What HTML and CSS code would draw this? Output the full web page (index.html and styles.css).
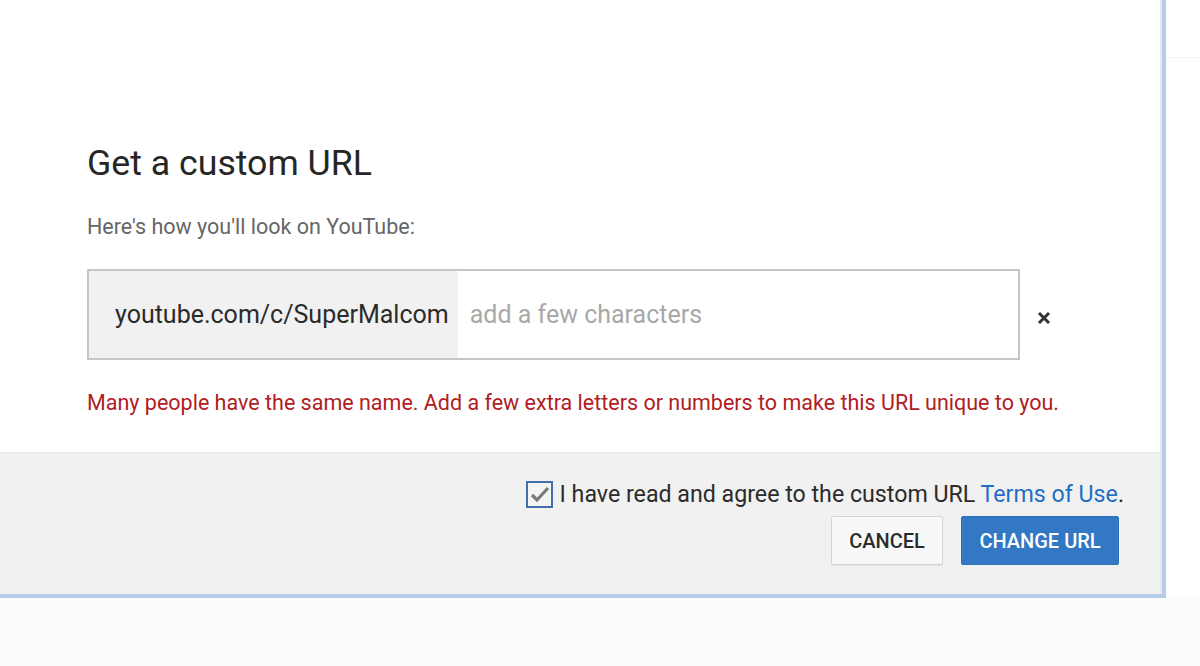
FILE: index.html
```html
<!DOCTYPE html>
<html>
<head>
<meta charset="utf-8">
<link rel="stylesheet" href="styles.css">
</head>
<body>
<div class="page">
  <div class="top">
    <div class="dialog">
      <div class="dialog-inner">
        <div class="content">
          <h1 class="title">Get a custom URL</h1>
          <p class="subtitle">Here's how you'll look on YouTube:</p>
          <div class="url-row">
            <div class="url-box">
              <span class="url-prefix">youtube.com/c/SuperMalcom</span>
              <span class="url-input">add a few characters</span>
            </div>
            <svg class="clear" viewBox="0 0 16 16" width="16" height="16"><path d="M3 3 L13 13 M13 3 L3 13" stroke="#333" stroke-width="3" stroke-linecap="butt"/></svg>
          </div>
          <p class="error">Many people have the same name. Add a few extra letters or numbers to make this URL unique to you.</p>
        </div>
        <div class="footer">
          <div class="agree">
            <span class="checkbox"><svg viewBox="0 0 27 27" width="27" height="27"><path d="M6 14 L11 19 L22 7" fill="none" stroke="#7a7a7a" stroke-width="3.2"/></svg></span>
            <span class="agree-text">I have read and agree to the custom URL <a class="link">Terms of Use</a>.</span>
          </div>
          <div class="buttons">
            <button class="btn btn-cancel">CANCEL</button>
            <button class="btn btn-primary">CHANGE URL</button>
          </div>
        </div>
      </div>
    </div>
    <div class="side"><div class="side-bar"></div></div>
  </div>
</div>
</body>
</html>
```

FILE: styles.css
```css
html, body {
  margin: 0;
  padding: 0;
}
body {
  font-family: Roboto, "Liberation Sans", Arial, sans-serif;
  background: #fcfcfc;
  width: 1200px;
  height: 666px;
  overflow: hidden;
}
.page {
  display: flex;
  flex-direction: column;
}
.top {
  display: flex;
  background: #fcfcfc;
}
.dialog {
  width: 1162px;
  border-right: 4px solid #b6cde9;
  border-bottom: 4px solid #b6cde9;
  background: #fff;
}
.dialog-inner {
  border-right: 2px solid #e9e9e9;
}
.content {
  height: 452px;
  box-sizing: border-box;
  padding: 143px 0 0 87px;
}
.title {
  margin: 0;
  font-size: 35.7px;
  line-height: 40px;
  font-weight: 400;
  color: #262626;
}
.subtitle {
  margin: 30px 0 0;
  font-size: 21.5px;
  line-height: 28px;
  color: #666;
}
.url-row {
  display: flex;
  align-items: center;
  margin-top: 28px;
}
.url-box {
  width: 933px;
  height: 91px;
  box-sizing: border-box;
  border: 2px solid #c6c6c6;
  display: flex;
  align-items: stretch;
  font-size: 25px;
}
.url-prefix {
  background: #f1f1f1;
  color: #2b2b2b;
  display: flex;
  align-items: center;
  padding: 0 9px 0 26px;
}
.url-input {
  color: #a8a8a8;
  display: flex;
  align-items: center;
  padding-left: 12px;
  background: #fff;
}
.clear {
  margin-left: 16px;
  margin-top: 6px;
}
.error {
  margin: 29px 0 0;
  font-size: 21.5px;
  line-height: 28px;
  color: #b0201f;
}
.footer {
  height: 142px;
  box-sizing: border-box;
  background: #f1f1f1;
  border-top: 1px solid #e8e8e8;
  padding-top: 27px;
  display: flex;
  flex-direction: column;
  align-items: flex-end;
}
.agree {
  display: flex;
  align-items: center;
  margin-right: 36px;
  height: 28px;
}
.checkbox {
  width: 27px;
  height: 27px;
  box-sizing: border-box;
  border: 2px solid #4170ad;
  background: #f4f4f4;
  display: flex;
  align-items: center;
  justify-content: center;
  margin-right: 7px;
  overflow: hidden;
}
.checkbox svg {
  flex: none;
}
.agree-text {
  font-size: 23.2px;
  color: #2b2b2b;
}
.link {
  color: #1f6fc6;
}
.buttons {
  display: flex;
  gap: 18px;
  margin-top: 8px;
  margin-right: 41px;
}
.btn {
  height: 49px;
  font-family: Roboto, "Liberation Sans", Arial, sans-serif;
  font-size: 20px;
  font-weight: 500;
  border-radius: 2px;
  padding: 0;
  cursor: pointer;
}
.btn-cancel {
  width: 112px;
  background: #f8f8f8;
  border: 1px solid #d3d3d3;
  color: #2b2b2b;
  box-shadow: 0 1px 0 rgba(0,0,0,0.05);
}
.btn-primary {
  width: 158px;
  background: #3278c5;
  border: 1px solid #2e6fb8;
  color: #fff;
}
.side {
  flex: 1;
  background: #fff;
  height: 598px;
}
.side-bar {
  height: 57px;
  border-bottom: 1px solid #f2f2f2;
}
```
